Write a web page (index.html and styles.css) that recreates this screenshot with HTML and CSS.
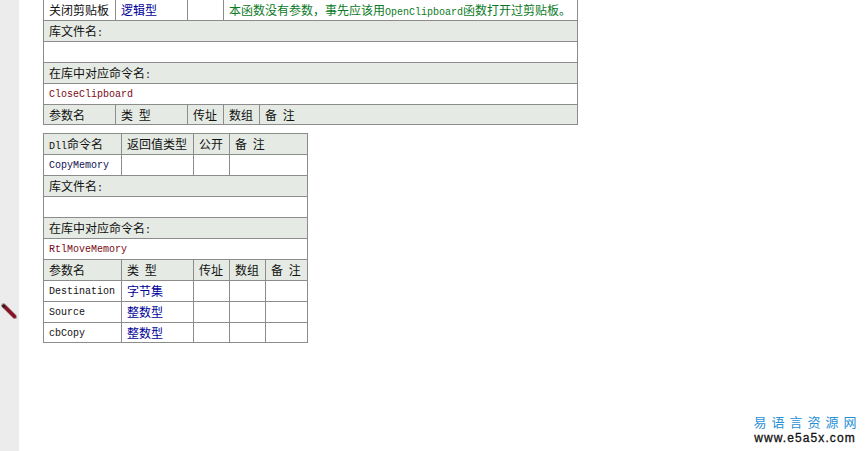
FILE: index.html
```html
<!DOCTYPE html>
<html lang="zh">
<head>
<meta charset="utf-8">
<title>易语言资源网</title>
<link rel="stylesheet" href="styles.css">
</head>
<body>
<div class="page">
  <aside class="gutter">
    <svg class="pencil" width="16" height="16" viewBox="0 0 16 16" aria-hidden="true">
      <path d="M2.5 2.5 L14 14" stroke="#b9a4a6" stroke-width="4.8" stroke-linecap="round"/>
      <path d="M3 3 L13.5 13.5" stroke="#861226" stroke-width="3.4" stroke-linecap="round"/>
      <path d="M1.5 2 L3.8 4.3" stroke="#2a2224" stroke-width="2.6"/>
    </svg>
  </aside>
  <main class="content">
    <table class="grid wide">
      <colgroup><col class="c72"><col class="c72"><col class="c36"><col class="c36"><col class="c318"></colgroup>
      <tr><td class="cn">关闭剪贴板</td><td class="cn type">逻辑型</td><td></td><td colspan="2" class="cn note">本函数没有参数，事先应该用<span class="word">OpenClipboard</span>函数打开过剪贴板。</td></tr>
      <tr class="head"><td colspan="5">库文件名<span class="word">:</span></td></tr>
      <tr><td colspan="5"></td></tr>
      <tr class="head"><td colspan="5">在库中对应命令名<span class="word">:</span></td></tr>
      <tr><td colspan="5" class="en alias">CloseClipboard</td></tr>
      <tr class="head last"><td>参数名</td><td class="spaced">类 型</td><td>传址</td><td>数组</td><td class="spaced">备 注</td></tr>
    </table>
    <table class="grid narrow">
      <colgroup><col class="c78"><col class="c72"><col class="c36"><col class="c36"><col class="c42"></colgroup>
      <tr class="head"><td><span class="word">Dll</span>命令名</td><td>返回值类型</td><td>公开</td><td colspan="2" class="spaced">备 注</td></tr>
      <tr><td class="en name">CopyMemory</td><td></td><td></td><td colspan="2"></td></tr>
      <tr class="head"><td colspan="5">库文件名<span class="word">:</span></td></tr>
      <tr><td colspan="5"></td></tr>
      <tr class="head"><td colspan="5">在库中对应命令名<span class="word">:</span></td></tr>
      <tr><td colspan="5" class="en alias">RtlMoveMemory</td></tr>
      <tr class="head"><td>参数名</td><td class="spaced">类 型</td><td>传址</td><td>数组</td><td class="spaced">备 注</td></tr>
      <tr><td class="en">Destination</td><td class="cn type">字节集</td><td></td><td></td><td></td></tr>
      <tr><td class="en">Source</td><td class="cn type">整数型</td><td></td><td></td><td></td></tr>
      <tr class="last"><td class="en">cbCopy</td><td class="cn type">整数型</td><td></td><td></td><td></td></tr>
    </table>
  </main>
</div>
<div class="mark">
  <div class="mark-cn">易语言资源网</div>
  <div class="mark-url">www.e5a5x.com</div>
</div>
</body>
</html>
```
FILE: styles.css
```css
html, body {
  margin: 0;
  padding: 0;
  height: 100%;
  overflow: hidden;
  background: #fff;
}

.page {
  display: flex;
  height: 451px;
  overflow: hidden;
}

.gutter {
  flex: 0 0 19px;
  background: #ececec;
  display: flex;
  align-items: flex-start;
  justify-content: flex-start;
  padding-top: 303px;
  box-sizing: border-box;
}

.pencil {
  margin-left: 1px;
  display: block;
}

.content {
  flex: 1;
  padding-left: 24px;
  margin-top: -1px;
}

.grid {
  border-collapse: collapse;
  table-layout: fixed;
  font-family: "Noto Sans CJK SC", sans-serif;
  font-size: 12px;
  line-height: 14px;
  color: #111;
}

.wide { width: 534px; }
.narrow { width: 264px; margin-top: 8px; }

.c72 { width: 72px; }
.c36 { width: 36px; }
.c78 { width: 78px; }
.c42 { width: 42px; }
.c318 { width: 318px; }

.grid td {
  height: 20px;
  padding: 0 0 0 5px;
  box-sizing: content-box;
  border: 1px solid #8c8c8c;
  white-space: nowrap;
  overflow: hidden;
}

.grid .last td { height: 19px; }

.head td { background: #e5ebe4; }

.word {
  font-family: "Liberation Mono", monospace;
  font-size: 10px;
  line-height: 0;
}

.grid td.en {
  font-family: "Liberation Mono", monospace;
  font-size: 10px;
  height: 18px;
  padding-top: 2px;
}

.grid .last td.en { height: 17px; }

.spaced { word-spacing: 3px; }
.cn { font-size: 12px; }
.type { color: #000099; }
.note { color: #0a7a1e; }
.grid td.alias { color: #7a0a14; }
.grid td.name { color: #101050; }

.mark {
  position: absolute;
  right: 8px;
  bottom: 6px;
  width: 106px;
  text-align: center;
}

.mark-cn {
  font-family: "Noto Sans CJK SC", sans-serif;
  font-size: 13px;
  line-height: 19px;
  letter-spacing: 5px;
  margin-right: -5px;
  color: #2a90d6;
}

.mark-url {
  font-family: "Liberation Sans", sans-serif;
  font-size: 12px;
  line-height: 14px;
  letter-spacing: 1.1px;
  -webkit-text-stroke: 0.3px #111;
  color: #111;
}
```
